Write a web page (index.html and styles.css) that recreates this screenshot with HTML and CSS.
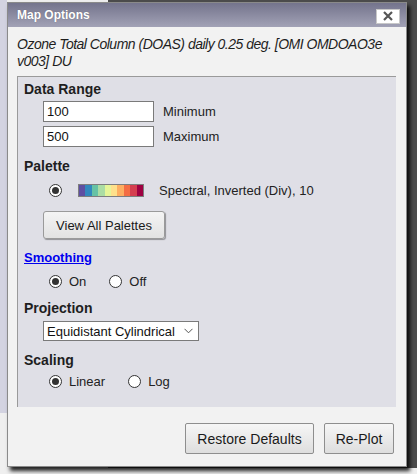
FILE: index.html
```html
<!DOCTYPE html>
<html>
<head>
<meta charset="utf-8">
<link rel="stylesheet" href="styles.css">
</head>
<body>
<div class="dialog">
  <div class="titlebar">
    <span class="title">Map Options</span>
    <span class="close"><svg width="10" height="10" viewBox="0 0 10 10"><path d="M1 1 L9 9 M9 1 L1 9" stroke="#555" stroke-width="2.2" fill="none"/></svg></span>
  </div>
  <div class="content">
    <p class="desc">Ozone Total Column (DOAS) daily 0.25 deg. [OMI OMDOAO3e v003] DU</p>
    <div class="panel">
      <div class="heading">Data Range</div>
      <div class="field first"><span class="input">100</span><span class="label">Minimum</span></div>
      <div class="field"><span class="input">500</span><span class="label">Maximum</span></div>

      <div class="heading sec">Palette</div>
      <div class="palrow">
        <span class="radio checked"></span>
        <span class="palbar">
          <i style="background:#5e4fa2"></i><i style="background:#3288bd"></i><i style="background:#66c2a5"></i><i style="background:#abdda4"></i><i style="background:#e6f598"></i><i style="background:#fee08b"></i><i style="background:#fdae61"></i><i style="background:#f46d43"></i><i style="background:#d53e4f"></i><i style="background:#9e0142"></i>
        </span>
        <span class="label">Spectral, Inverted (Div), 10</span>
      </div>
      <div class="btnrow"><span class="btn">View All Palettes</span></div>

      <a class="heading link sec">Smoothing</a>
      <div class="radios r1">
        <span class="opt"><span class="radio checked"></span><span class="label">On</span></span>
        <span class="opt off"><span class="radio"></span><span class="label">Off</span></span>
      </div>

      <div class="heading sec">Projection</div>
      <div class="select"><span>Equidistant Cylindrical</span><svg width="9" height="6" viewBox="0 0 9 6"><path d="M0.5 0.8 L4.5 4.8 L8.5 0.8" stroke="#555" stroke-width="1" fill="none"/></svg></div>

      <div class="heading sec">Scaling</div>
      <div class="radios r2">
        <span class="opt"><span class="radio checked"></span><span class="label">Linear</span></span>
        <span class="opt log"><span class="radio"></span><span class="label">Log</span></span>
      </div>
    </div>
    <div class="footer">
      <span class="btn big restore">Restore Defaults</span>
      <span class="btn big">Re-Plot</span>
    </div>
  </div>
</div>
</body>
</html>
```
FILE: styles.css
```css
html, body { margin: 0; }
body {
  width: 417px;
  height: 474px;
  overflow: hidden;
  box-sizing: border-box;
  padding: 2px 0 0 7px;
  font-family: "Liberation Sans", Arial, sans-serif;
  color: #222;
  background:
    linear-gradient(#d3d3e1, #d3d3e1) 0 0 / 7px 413px no-repeat,
    linear-gradient(#4c4c4c, #4c4c4c) 108px 0 / 309px 468px no-repeat,
    #efefef;
}
.dialog {
  width: 400px;
  height: 465px;
  box-sizing: border-box;
  border: 1px solid #8a8a8a;
  background: #f2f2f2;
  box-shadow: 3px 4px 4px rgba(0,0,0,0.85);
  display: flex;
  flex-direction: column;
}
.titlebar {
  height: 24px;
  background: linear-gradient(#74748c, #a2a2b6);
  display: flex;
  align-items: center;
  justify-content: space-between;
  padding: 0 6px 0 9px;
}
.title {
  color: #fff;
  font-weight: bold;
  font-size: 12px;
  text-shadow: 0 0 1px rgba(0,0,0,0.3);
}
.close {
  width: 22px;
  height: 13px;
  background: #fff;
  border: 1px solid #c8c8c8;
  display: flex;
  align-items: center;
  justify-content: center;
  margin-top: 2px;
}
.content {
  flex: 1;
  display: flex;
  flex-direction: column;
  padding: 0 10px 0 9px;
}
.desc {
  margin: 9px 0 0 0;
  font-size: 14px;
  letter-spacing: -0.5px;
  font-style: italic;
  line-height: 17px;
  color: #1e1e1e;
}
.panel {
  margin-top: 6px;
  height: 331px;
  box-sizing: border-box;
  background: #dfdfe6;
  border-top: 1px solid #9a9a9a;
  border-left: 1px solid #9a9a9a;
  padding: 4px 0 0 6px;
  display: flex;
  flex-direction: column;
  align-items: flex-start;
}
.heading {
  font-weight: bold;
  font-size: 14px;
  line-height: 16px;
  color: #1e1e1e;
}
.heading.sec { margin-top: 11px; }
.link {
  color: #0000ee;
  text-decoration: underline;
  font-size: 13px;
}
.field {
  display: flex;
  align-items: center;
  margin: 4px 0 0 19px;
}
.input {
  width: 111px;
  height: 21px;
  box-sizing: border-box;
  background: #fff;
  border: 1px solid #7a7a7a;
  font-size: 13px;
  line-height: 19px;
  padding-left: 3px;
  color: #111;
}
.label {
  font-size: 13px;
  color: #222;
}
.field .label { margin-left: 9px; }
.radio {
  width: 13px;
  height: 13px;
  box-sizing: border-box;
  border: 1px solid #333;
  border-radius: 50%;
  background: #fff;
  display: inline-flex;
  align-items: center;
  justify-content: center;
  flex: none;
}
.radio.checked::after {
  content: "";
  width: 7px;
  height: 7px;
  border-radius: 50%;
  background: #333;
}
.palrow {
  display: flex;
  align-items: center;
  height: 16px;
  margin: 8px 0 0 25px;
}
.palbar {
  display: flex;
  margin-left: 16px;
  width: 66px;
  height: 13px;
  box-sizing: border-box;
  border: 1px solid #7d7d7d;
}
.palbar i { flex: 1; }
.palrow .label { margin-left: 15px; }
.btnrow { margin: 13px 0 0 19px; }
.btn {
  display: inline-flex;
  align-items: center;
  justify-content: center;
  box-sizing: border-box;
  background: linear-gradient(#f4f4f4, #e2e2e2);
  border: 1px solid #9a9a9a;
  border-radius: 3px;
  box-shadow: 1px 1px 1px rgba(0,0,0,0.35);
  font-size: 13px;
  color: #1a1a1a;
}
.btnrow .btn {
  width: 122px;
  height: 28px;
}
.radios {
  display: flex;
  align-items: center;
  height: 16px;
  margin-left: 25px;
}
.radios.r1 { margin-top: 7px; }
.radios.r2 { margin-top: 5px; }
.opt {
  display: flex;
  align-items: center;
}
.opt .label { margin-left: 7px; }
.opt.off { margin-left: 23px; }
.opt.log { margin-left: 23px; }
.select {
  margin: 5px 0 0 19px;
  width: 156px;
  height: 20px;
  box-sizing: border-box;
  background: #fff;
  border: 1px solid #7a7a7a;
  display: flex;
  align-items: center;
  justify-content: space-between;
  padding: 0 5px 0 3px;
  font-size: 13px;
  color: #111;
}
.footer {
  display: flex;
  justify-content: flex-end;
  gap: 10px;
  margin-top: 16px;
  padding-right: 2px;
}
.btn.big {
  height: 31px;
  font-size: 14px;
  border-radius: 2px;
  border-color: #8e8e8e;
  box-shadow: none;
  background: linear-gradient(#f6f6f6, #dedede);
}
.btn.restore { width: 129px; }
.btn.big:last-child { width: 70px; }
```
